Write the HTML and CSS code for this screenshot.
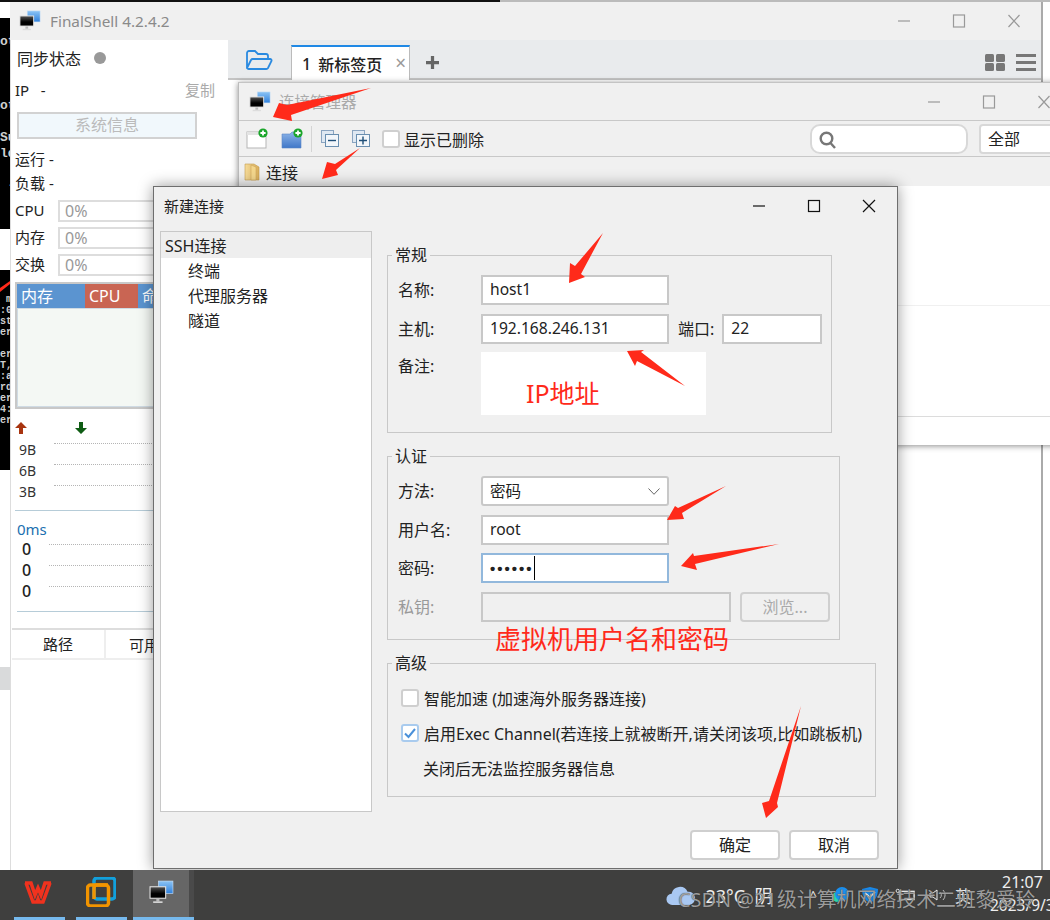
FILE: index.html
```html
<!DOCTYPE html>
<html lang="zh">
<head>
<meta charset="UTF-8">
<meta name="viewport" content="width=device-width, initial-scale=1.0">
<title>FinalShell 新建连接</title>
<link rel="stylesheet" href="styles.css">
</head>
<body>

<svg class="defs" width="0" height="0">
  <defs>
    <linearGradient id="backScreen" x1="0" y1="0" x2="0" y2="1"><stop offset="0" stop-color="#8cc4f5"/><stop offset="1" stop-color="#2f80dc"/></linearGradient>
    <linearGradient id="frontScreen" x1="0" y1="0" x2="0" y2="1"><stop offset="0" stop-color="#555"/><stop offset=".6" stop-color="#000"/></linearGradient>
    <linearGradient id="blueFolder" x1="0" y1="0" x2="0" y2="1"><stop offset="0" stop-color="#8db4e8"/><stop offset="1" stop-color="#3f77c8"/></linearGradient>
    <linearGradient id="yellowFolder" x1="0" y1="0" x2="1" y2="0"><stop offset="0" stop-color="#f6dc9a"/><stop offset="1" stop-color="#d9ae5a"/></linearGradient>
    <symbol id="monitor" viewBox="0 0 24 24">
      <rect x="9" y="1" width="14" height="12" fill="url(#backScreen)" stroke="#c9dff5" stroke-width=".6"/>
      <rect x="1" y="6.5" width="15" height="11" fill="url(#frontScreen)" stroke="#e8e8e8" stroke-width="1"/>
      <rect x="7" y="18" width="3" height="2.5" fill="#bbb"/>
      <rect x="4" y="20.5" width="9" height="1.5" fill="#ddd"/>
    </symbol>
    <symbol id="plusBadge" viewBox="0 0 10 10">
      <circle cx="5" cy="5" r="4.6" fill="#1aa52a"/>
      <path d="M5 2.4v5.2M2.4 5h5.2" stroke="#fff" stroke-width="1.8"/>
    </symbol>
  </defs>
</svg>

<div class="desk">
  <div class="topline"></div>

  <div class="backdrop">
    <pre class="term term-a">

ot



ot

Su
ld

 -</pre>
    <pre class="term term-b"> m
:0
st
er

er
T,
:a
rd
er
4:
er</pre>
    <div class="back-band"></div>
  </div>

  <!-- main window -->
  <div class="window main-window">
    <div class="titlebar main-title">
      <svg class="app-icon"><use href="#monitor"/></svg>
      <span class="app-name">FinalShell 4.2.4.2</span>
      <div class="win-controls faded">
        <svg viewBox="0 0 14 14"><path d="M1 7h12"/></svg>
        <svg viewBox="0 0 14 14"><rect x="1.5" y="1" width="11" height="12"/></svg>
        <svg viewBox="0 0 14 14"><path d="M1.5 1l11 12M12.5 1l-11 12"/></svg>
      </div>
    </div>

    <div class="main-body">
      <aside class="side-panel">
        <div class="sync-row">同步状态<span class="sync-dot"></span></div>
        <div class="ip-row"><span>IP &nbsp; -</span><span class="copy-link">复制</span></div>
        <div class="sysinfo">系统信息</div>
        <div class="stat-row first">运行 -</div>
        <div class="stat-row">负载 -</div>
        <div class="gauges">
          <span>CPU</span><div class="gauge">0%</div>
          <span>内存</span><div class="gauge">0%</div>
          <span>交换</span><div class="gauge">0%</div>
        </div>
        <div class="proc-table">
          <div class="proc-head">
            <span class="col-mem">内存</span>
            <span class="col-cpu">CPU</span>
            <span class="col-cmd">命令</span>
          </div>
          <div class="proc-body"></div>
        </div>
        <div class="net-arrows">
          <svg viewBox="0 0 12 12"><path class="up" d="M6 0l6 6H8v6H4V6H0z"/></svg>
          <svg viewBox="0 0 12 12"><path class="down" d="M6 12l6-6H8V0H4v6H0z"/></svg>
        </div>
        <div class="chart-rows net">
          <div class="chart-row"><span>9B</span><i></i></div>
          <div class="chart-row"><span>6B</span><i></i></div>
          <div class="chart-row"><span>3B</span><i></i></div>
        </div>
        <div class="rule"></div>
        <div class="ping-label">0ms</div>
        <div class="chart-rows ping">
          <div class="chart-row"><span>0</span><i></i></div>
          <div class="chart-row"><span>0</span><i></i></div>
          <div class="chart-row"><span>0</span><i></i></div>
        </div>
        <div class="rule rule-b"></div>
        <div class="disk-head"><span class="disk-path">路径</span><span>可用</span></div>
      </aside>

      <div class="work-area">
        <div class="tabbar">
          <svg class="open-icon" viewBox="0 0 28 21"><path d="M2 18V3a2 2 0 0 1 2-2h6l3 3h8a2 2 0 0 1 2 2v3M2 18l4-8a2 2 0 0 1 2-1h17a1.500 1.500 0 0 1 1.500 2l-3.500 7a2 2 0 0 1-2 1H4a2 2 0 0 1-2-1z"/></svg>
          <div class="tab"><b>1</b><b>新标签页</b><span class="tab-close">×</span></div>
          <svg class="tab-add" viewBox="0 0 12 12"><path d="M6 0v12M0 6h12"/></svg>
          <div class="tab-tools">
            <svg viewBox="0 0 20 17"><rect width="9" height="8" rx="1.500"/><rect x="11" width="9" height="8" rx="1.500"/><rect y="9" width="9" height="8" rx="1.500"/><rect x="11" y="9" width="9" height="8" rx="1.500"/></svg>
            <svg viewBox="0 0 20 17"><rect width="20" height="3"/><rect y="7" width="20" height="3"/><rect y="14" width="20" height="3"/></svg>
          </div>
        </div>
        <div class="main-rest"></div>
      </div>
    </div>
  </div>

  <!-- connection manager -->
  <div class="window manager">
    <div class="titlebar manager-title">
      <svg class="app-icon"><use href="#monitor"/></svg>
      <span class="manager-name">连接管理器</span>
      <div class="win-controls faded">
        <svg viewBox="0 0 14 14"><path d="M1 7h12"/></svg>
        <svg viewBox="0 0 14 14"><rect x="1.500" y="1" width="11" height="12"/></svg>
        <svg viewBox="0 0 14 14"><path d="M1.500 1l11 12M12.500 1l-11 12"/></svg>
      </div>
    </div>
    <div class="manager-tools">
      <svg class="tool-icon" viewBox="0 0 22 21">
        <rect x="1" y="4" width="19" height="16" fill="#fff" stroke="#b5b5b5"/>
        <rect x="1" y="4" width="19" height="3" fill="#e4e4e4"/>
        <use href="#plusBadge" x="12" y="0" width="10" height="10"/>
      </svg>
      <svg class="tool-icon gap-b" viewBox="0 0 22 21">
        <path d="M1 6h8l2-2h9v16H1z" fill="url(#blueFolder)" stroke="#5a88c8" stroke-width=".6"/>
        <use href="#plusBadge" x="12" y="0" width="10" height="10"/>
      </svg>
      <span class="tool-sep"></span>
      <svg class="tree-icon" viewBox="0 0 18 17">
        <rect x=".5" y=".5" width="12" height="12" fill="#dfe8f2" stroke="#8aa4c0"/>
        <rect x="4.500" y="4.500" width="13" height="12" fill="#f2f6fa" stroke="#6a8fb0"/>
        <path d="M7 10.500h8" stroke="#1f4f78" stroke-width="1.400"/>
      </svg>
      <svg class="tree-icon plus" viewBox="0 0 18 17">
        <rect x=".5" y=".5" width="12" height="12" fill="#dfe8f2" stroke="#8aa4c0"/>
        <rect x="4.500" y="4.500" width="13" height="12" fill="#f2f6fa" stroke="#6a8fb0"/>
        <path d="M7 10.500h8M11 6.500v8" stroke="#1f4f78" stroke-width="1.400"/>
      </svg>
      <span class="check small"></span>
      <span class="show-deleted">显示已删除</span>
      <div class="search">
        <svg viewBox="0 0 18 18"><circle cx="7.500" cy="7.500" r="5.800"/><path d="M11.500 12l4.500 5"/></svg>
      </div>
      <div class="combo">全部</div>
    </div>
    <div class="manager-tree">
      <svg viewBox="0 0 16 19"><path d="M1 2h9l5 3v13H1z" fill="url(#yellowFolder)" stroke="#c49a4e" stroke-width=".6"/><path d="M7 3l5 2v13H7z" fill="#f3d68c" stroke="#c49a4e" stroke-width=".5"/></svg>
      连接
    </div>
    <div class="manager-list">
      <div class="list-line a"></div>
      <div class="list-line b"></div>
    </div>
  </div>

  <!-- new connection dialog -->
  <div class="window dialog">
    <div class="titlebar dialog-title">
      <span class="dialog-name">新建连接</span>
      <div class="win-controls">
        <svg viewBox="0 0 14 14"><path d="M1 7h12"/></svg>
        <svg viewBox="0 0 14 14"><rect x="1.500" y="1.500" width="11" height="11"/></svg>
        <svg viewBox="0 0 14 14"><path d="M1 1l12 12M13 1L1 13"/></svg>
      </div>
    </div>
    <div class="dialog-body">
      <ul class="nav-list">
        <li class="selected">SSH连接</li>
        <li>终端</li>
        <li>代理服务器</li>
        <li>隧道</li>
      </ul>
      <div class="dialog-form">
        <section class="group group-general">
          <h2>常规</h2>
          <div class="form-grid">
            <label>名称:</label><div class="field w188">host1</div>
            <label>主机:</label>
            <div class="host-row">
              <div class="field w188">192.168.246.131</div>
              <span class="port-label">端口:</span>
              <div class="field w100">22</div>
            </div>
            <label class="top">备注:</label>
            <div class="remark">IP地址</div>
          </div>
        </section>
        <section class="group group-auth">
          <h2>认证</h2>
          <div class="form-grid">
            <label>方法:</label>
            <div class="field w188 select">密码
              <svg viewBox="0 0 12 7"><path d="M.5.5L6 6.300 11.500.5"/></svg>
            </div>
            <label>用户名:</label><div class="field w188">root</div>
            <label>密码:</label><div class="field w188 focused"><span class="dots">••••••</span><span class="caret"></span></div>
            <label class="disabled">私钥:</label>
            <div class="key-row">
              <div class="field w250 off"></div>
              <div class="btn btn-off">浏览...</div>
            </div>
          </div>
        </section>
        <section class="group group-advanced">
          <h2>高级</h2>
          <div class="opt-row"><span class="check"></span>智能加速 (加速海外服务器连接)</div>
          <div class="opt-row">
            <span class="check checked"><svg viewBox="0 0 14 14"><path d="M2 7.500l3.500 3.500L12 3"/></svg></span>
            启用Exec Channel(若连接上就被断开,请关闭该项,比如跳板机)
          </div>
          <div class="opt-row note-row">关闭后无法监控服务器信息</div>
        </section>
        <div class="dialog-buttons">
          <div class="btn">确定</div>
          <div class="btn">取消</div>
        </div>
      </div>
    </div>
  </div>

  <!-- red marks pasted on top of the screenshot -->
  <svg class="marks" viewBox="0 0 1050 920">
    <polygon points="371,88 287,105 279,103 273,117 292,121 291,115"/>
    <polygon points="360,148 335,164 327,162 322,179 338,175 336,170"/>
    <polygon points="603,233 575,266 570,263 569,283 585,277 581,274"/>
    <polygon points="685,386 641,352 644,350 627,351 635,366 637,361"/>
    <polygon points="726,486 678,508 675,506 667,520 684,519 682,513"/>
    <polygon points="779,544 694,556 693,553 681,566 697,570 695,564"/>
    <polygon points="801,706 777,803 778,807 766,818 762,803 769,801"/>
    <polygon points="0,288 10,281 10,284 0,292"/>
  </svg>
  <div class="mark-text">虚拟机用户名和密码</div>

  <!-- taskbar -->
  <footer class="taskbar">
    <div class="task-app">
      <svg class="wps" viewBox="0 0 30 24"><path d="M2 3h6l4 12 3-7 3 7 4-12h6" fill="none"/><path d="M3 3l7 19h4l1-3 1 3h4l7-19" fill="none"/></svg>
    </div>
    <div class="task-app">
      <svg class="vm" viewBox="0 0 30 30">
        <rect x="8" y="1" width="21" height="21" rx="3" fill="none" stroke="#12a0dc" stroke-width="3.500"/>
        <rect x="1.500" y="8" width="21" height="21" rx="3" fill="none" stroke="#f29400" stroke-width="3.500"/>
        <path d="M8 22V11a3 3 0 0 1 3-3h11" fill="none" stroke="#f29400" stroke-width="3.500"/>
      </svg>
    </div>
    <div class="task-app active"><svg class="mon"><use href="#monitor"/></svg></div>
    <div class="tray">
      <svg class="cloud" viewBox="0 0 32 22"><path d="M7 21a6 6 0 0 1-1-12 9 9 0 0 1 17-2 7 7 0 0 1 2 14z" fill="#a9c8f2"/></svg>
      <span class="weather">23°C &nbsp;阴</span>
      <span class="chev">^</span>
      <svg class="tray-icon bubble" viewBox="0 0 18 18"><circle cx="6" cy="11" r="5" fill="#2dd4a8"/><circle cx="11" cy="8" r="7" fill="#1a90f0"/></svg>
      <svg class="tray-icon shield" viewBox="0 0 18 18"><path d="M1 3l8-2 8 2c0 7-3 12-8 14C4 15 1 10 1 3z" fill="#1a88e8"/><path d="M4 7l5 4 5-5" stroke="#fff" stroke-width="1.500" fill="none"/></svg>
      <svg class="tray-icon battery" viewBox="0 0 22 14"><rect x="5" y="3" width="16" height="9" fill="none" stroke="#eee" stroke-width="1.500"/><circle cx="3" cy="2.500" r="1.800" fill="none" stroke="#eee"/></svg>
      <svg class="tray-icon speaker" viewBox="0 0 18 14"><path d="M1 5h3l4-3v10L4 9H1z" fill="none" stroke="#eee"/><path d="M11 4a4 4 0 0 1 0 6M14 2a7 7 0 0 1 0 10" fill="none" stroke="#bbb"/></svg>
      <span class="ime">英</span>
      <div class="clock"><span class="clock-time">21:07</span><span>2023/9/3</span></div>
    </div>
  </footer>
  <div class="watermark">CSDN @21级计算机网络技术二班黎爱玲</div>
</div>

</body>
</html>
```

FILE: styles.css
```css
* {
  box-sizing: border-box;
}
body {
  margin: 0;
  font-family: "Noto Sans", "Noto Sans CJK SC", sans-serif;
  font-size: 16px;
  color: #222;
}
.defs {
  position: absolute;
}
.desk {
  position: relative;
  width: 1050px;
  height: 920px;
  overflow: hidden;
  background: #fff;
}
.topline {
  position: absolute;
  top: 0;
  left: 0;
  width: 1050px;
  height: 2px;
  background: linear-gradient(to right, #111 0, #111 500px, #bbb 500px);
  z-index: 5;
}

/* what shows left of the main window */
.backdrop {
  position: absolute;
  left: 0;
  top: 0;
  width: 10px;
  height: 870px;
  background: #fff;
  overflow: hidden;
}
.term {
  position: absolute;
  left: 0;
  margin: 0;
  width: 10px;
  overflow: hidden;
  background: #000;
  color: #cfcfcf;
  font-family: "Liberation Mono", monospace;
  font-weight: bold;
}
.term-a {
  top: 18px;
  height: 211px;
  font-size: 13px;
  line-height: 16px;
}
.term-b {
  top: 270px;
  height: 200px;
  padding-top: 24px;
  font-size: 10px;
  line-height: 11px;
}
.back-band {
  position: absolute;
  top: 667px;
  left: 0;
  width: 10px;
  height: 23px;
  background: #d9dadb;
}

/* windows */
.window {
  position: absolute;
  background: #f0f0f0;
}
.titlebar {
  display: flex;
  align-items: center;
}
.win-controls {
  display: flex;
  margin-left: auto;
}
.win-controls svg {
  width: 14px;
  height: 14px;
  margin: 0 20.500px;
  fill: none;
  stroke: #111;
  stroke-width: 1.200;
}
.win-controls.faded svg {
  stroke: #999;
}
.app-icon {
  width: 22px;
  height: 22px;
}

.main-window {
  left: 10px;
  top: 2px;
  width: 1033px;
  height: 868px;
  border-right: 2px solid #aaa;
  display: flex;
  flex-direction: column;
}
.main-title {
  height: 38px;
  flex: none;
  padding-left: 9px;
}
.app-name {
  margin-left: 9px;
  font-size: 15.300px;
  color: #8a8a8a;
}
.main-body {
  flex: 1;
  display: flex;
  min-height: 0;
  background: #fff;
}

/* left panel */
.side-panel {
  width: 218px;
  flex: none;
  padding-left: 4px;
  overflow: hidden;
  background: #fff;
  border-left: 1px solid #ddd;
  font-size: 15px;
}
.sync-row {
  height: 35px;
  padding-left: 2px;
  display: flex;
  align-items: center;
  font-size: 16px;
}
.sync-dot {
  width: 12px;
  height: 12px;
  margin-left: 13px;
  border-radius: 50%;
  background: #999;
}
.ip-row {
  height: 29px;
  padding-right: 13px;
  display: flex;
  justify-content: space-between;
  align-items: center;
}
.copy-link {
  color: #aaa;
}
.sysinfo {
  width: 180px;
  height: 27px;
  margin: 8px 0 0 2px;
  border: 2px solid #d2d2d2;
  background: #f1f8fc;
  color: #bbb;
  font-size: 16px;
  text-align: center;
  line-height: 23px;
}
.stat-row {
  height: 24px;
  line-height: 22px;
}
.stat-row.first {
  margin-top: 9px;
}
.gauges {
  margin-top: 4px;
  display: grid;
  grid-template-columns: 43px 1fr;
  grid-auto-rows: 22px;
  row-gap: 5px;
  align-items: center;
}
.gauges span {
  line-height: 18px;
  padding-bottom: 2px;
}
.gauge {
  height: 22px;
  margin-right: 8px;
  padding-left: 5px;
  border: 2px solid #ddd;
  font-size: 16px;
  line-height: 18px;
  color: #999;
}
.proc-table {
  height: 127px;
  margin-top: 6px;
  border: 2px solid #c8c8c8;
  display: flex;
  flex-direction: column;
}
.proc-head {
  height: 24px;
  flex: none;
  display: flex;
  color: #fff;
  line-height: 24px;
  font-size: 16px;
}
.proc-head span {
  padding-left: 4px;
}
.col-mem {
  width: 68px;
  background: #5b94d0;
}
.col-cpu {
  width: 53px;
  background: #c96553;
}
.col-cmd {
  flex: 1;
  background: #5b94d0;
}
.proc-body {
  flex: 1;
  background: #f4f8f4;
  border: 1px solid #cfdbe4;
}
.net-arrows {
  height: 14px;
  margin-top: 13px;
  display: flex;
  gap: 48px;
}
.net-arrows svg {
  width: 12px;
  height: 12px;
}
.up {
  fill: #a83410;
}
.down {
  fill: #0f5c14;
}
.chart-rows {
  display: flex;
  flex-direction: column;
}
.chart-row {
  height: 21px;
  display: flex;
  align-items: center;
}
.chart-row i {
  flex: 1;
  height: 0;
  margin-top: -12px;
  border-top: 1px dotted #b5b5b5;
}
.net {
  margin-top: 3px;
}
.net span {
  width: 39px;
  padding-left: 4px;
  font-size: 14px;
  color: #333;
}
.net i {
  margin-right: 72px;
}
.rule {
  height: 1px;
  margin-top: 8px;
  background: #b6ccd8;
}
.ping-label {
  margin: 9px 0 0 2px;
  color: #2070b0;
  line-height: 19px;
}
.ping {
  margin-top: -1px;
}
.ping span {
  width: 34px;
  padding-left: 7px;
  font-size: 16px;
  font-weight: 500;
}
.ping i {
  margin-right: 72px;
  margin-top: -8px;
}
.rule-b {
  margin: 10px 0 0 2px;
}
.disk-head {
  height: 32px;
  margin: 16px 0 0 -3px;
  border-top: 2px solid #ddd;
  border-bottom: 2px solid #eee;
  display: flex;
  align-items: center;
}
.disk-path {
  width: 94px;
  margin-right: 23px;
  border-right: 2px solid #eee;
  text-align: center;
  line-height: 28px;
}

/* tabs */
.work-area {
  flex: 1;
  display: flex;
  flex-direction: column;
}
.tabbar {
  height: 40px;
  flex: none;
  display: flex;
  align-items: flex-end;
  padding-left: 17px;
  background: #e9ebed;
  border-bottom: 2px solid #c4c4c4;
}
.open-icon {
  width: 28px;
  height: 21px;
  margin-bottom: 7px;
  fill: none;
  stroke: #2a8ae0;
  stroke-width: 1.800;
}
.tab {
  width: 119px;
  height: 35px;
  margin: 0 0 -2px 18px;
  padding-left: 10px;
  display: flex;
  gap: 7px;
  align-items: center;
  background: #fff;
  border-top: 2px solid #1e88e5;
  border-left: 1px solid #bbb;
  border-right: 1px solid #bbb;
}
.tab b {
  font-weight: 500;
}
.tab-close {
  margin-left: 6px;
  font-size: 19px;
  line-height: 1;
  color: #999;
}
.tab-add {
  width: 13px;
  height: 13px;
  margin: 0 0 9px 16px;
  fill: none;
  stroke: #666;
  stroke-width: 3;
}
.tab-tools {
  margin: 0 0 7px auto;
  padding-right: 5px;
  display: flex;
  gap: 11px;
}
.tab-tools svg {
  width: 20px;
  height: 17px;
  fill: #777;
}
.main-rest {
  flex: 1;
  background: #fff;
}

/* connection manager */
.manager {
  left: 238px;
  top: 82px;
  width: 835px;
  height: 363px;
  border-left: 1px solid #bbb;
  border-top: 1px solid #c4c4c4;
  box-shadow: 0 1px 6px rgba(0, 0, 0, .45);
  display: flex;
  flex-direction: column;
}
.manager-title {
  height: 38px;
  flex: none;
  padding-left: 10px;
  padding-right: 2px;
  border-bottom: 1px solid #c8c8c8;
}
.manager-name {
  margin-left: 8px;
  font-size: 15.500px;
  color: #aaa;
}
.manager-tools {
  height: 36px;
  flex: none;
  padding-left: 7px;
  display: flex;
  align-items: center;
  border-bottom: 1px solid #c8c8c8;
}
.tool-icon {
  width: 22px;
  height: 21px;
  flex: none;
  margin-right: 13px;
}
.tool-sep {
  width: 1px;
  height: 26px;
  flex: none;
  margin: 0 9px 0 -5px;
  background: #d4d4d4;
}
.tree-icon {
  width: 18px;
  height: 17px;
  flex: none;
  margin-right: 13px;
}
.check {
  width: 18px;
  height: 18px;
  flex: none;
  border: 2px solid #cfcfcf;
  border-radius: 3px;
  background: #fff;
}
.check.small {
  margin-left: -1px;
}
.show-deleted {
  flex: none;
  margin-left: 4px;
  white-space: nowrap;
}
.search {
  width: 158px;
  height: 30px;
  flex: none;
  margin-left: 326px;
  padding: 5px 0 0 7px;
  border: 2px solid #d8d8d8;
  border-radius: 10px;
  background: #fff;
}
.search svg {
  width: 18px;
  height: 18px;
  fill: none;
  stroke: #777;
  stroke-width: 2.400;
}
.combo {
  width: 100px;
  height: 30px;
  flex: none;
  margin-left: 11px;
  padding-left: 7px;
  border: 2px solid #d8d8d8;
  border-radius: 4px;
  background: #fff;
  line-height: 26px;
}
.manager-tree {
  height: 29px;
  flex: none;
  padding-left: 5px;
  display: flex;
  align-items: center;
  gap: 6px;
}
.manager-tree svg {
  width: 16px;
  height: 19px;
}
.manager-list {
  flex: 1;
  background: #fff;
  display: flex;
  flex-direction: column;
}
.list-line {
  height: 1px;
}
.list-line.a {
  margin-top: 119px;
  background: #f0f0f0;
}
.list-line.b {
  margin-top: 110px;
  background: #dcdcdc;
}

/* new connection dialog */
.dialog {
  left: 153px;
  top: 186px;
  width: 745px;
  height: 683px;
  border: 1px solid #6e6e6e;
  box-shadow: 0 0 14px rgba(0, 0, 0, .4);
  display: flex;
  flex-direction: column;
}
.dialog-title {
  height: 38px;
  flex: none;
  padding-left: 10px;
  padding-right: 1px;
  font-size: 15px;
}
.dialog-name {
  padding-bottom: 2px;
}
.dialog-body {
  flex: 1;
  display: flex;
  padding: 6px 18px 0 6px;
}
.nav-list {
  width: 212px;
  height: 581px;
  flex: none;
  margin: 0;
  padding: 0;
  list-style: none;
  background: #fff;
  border: 1px solid #c8c8c8;
}
.nav-list li {
  height: 25px;
  padding-left: 27px;
  line-height: 27px;
}
.nav-list li.selected {
  height: 26px;
  padding-left: 4px;
  background: #eeeeee;
  line-height: 29px;
}
.dialog-form {
  flex: 1;
  margin-left: 15px;
  padding-top: 24px;
  display: flex;
  flex-direction: column;
  gap: 23px;
}
.group {
  position: relative;
  border: 1px solid #c8c8c8;
}
.group h2 {
  position: absolute;
  top: -11px;
  left: 4px;
  margin: 0;
  padding: 0 3px;
  background: #f0f0f0;
  font-size: 16px;
  font-weight: normal;
  line-height: 20px;
}
.group-general {
  width: 445px;
  height: 178px;
  padding: 19px 0 0 10px;
}
.group-auth {
  width: 453px;
  height: 184px;
  padding: 19px 0 0 10px;
}
.group-advanced {
  width: 489px;
  height: 134px;
  padding: 16px 0 0 13px;
}
.form-grid {
  display: grid;
  grid-template-columns: 83px 1fr;
  row-gap: 8.600px;
  align-items: center;
}
.form-grid label {
  padding-bottom: 2px;
}
.form-grid label.top {
  align-self: start;
  padding-top: 1px;
}
.form-grid label.disabled {
  color: #999;
}
.field {
  height: 30px;
  padding-left: 7px;
  border: 2px solid #c8c8c8;
  background: #fff;
  font-size: 15.600px;
  line-height: 25px;
}
.w188 {
  width: 188px;
}
.w100 {
  width: 100px;
}
.w250 {
  width: 250px;
}
.host-row,
.key-row {
  display: flex;
  align-items: center;
}
.port-label {
  margin: 0 8px 0 9px;
  padding-bottom: 2px;
}
.key-row {
  gap: 9px;
}
.remark {
  width: 225px;
  height: 63px;
  padding: 23px 0 0 45px;
  background: #fff;
  color: #ff2a1a;
  font-size: 25px;
  line-height: 36px;
}
.select {
  padding-right: 7px;
  border-radius: 3px;
  display: flex;
  justify-content: space-between;
  align-items: center;
}
.select svg {
  width: 12px;
  height: 7px;
  fill: none;
  stroke: #666;
}
.focused {
  border-color: #92b8dc;
  display: flex;
  align-items: center;
}
.dots {
  font-size: 15px;
  font-family: "Liberation Sans", sans-serif;
  font-weight: bold;
  letter-spacing: 2px;
}
.caret {
  width: 1px;
  height: 24px;
  margin-left: 0;
  background: #000;
}
.off {
  background: #f0f0f0;
}
.btn {
  width: 90px;
  height: 30px;
  border: 2px solid #cfcfcf;
  border-radius: 4px;
  background: #fff;
  text-align: center;
  line-height: 26px;
}
.btn-off {
  background: #f0f0f0;
  color: #aaa;
}
.opt-row {
  height: 35px;
  display: flex;
  align-items: center;
  gap: 5px;
  white-space: nowrap;
}
.note-row {
  padding-left: 22px;
}
.check.checked {
  border-color: #a9cbee;
}
.check.checked svg {
  display: block;
  fill: none;
  stroke: #4a90d9;
  stroke-width: 2;
}
.dialog-buttons {
  margin-top: 10px;
  width: 492px;
  display: flex;
  justify-content: flex-end;
  gap: 9px;
}

/* annotations */
.marks {
  position: absolute;
  left: 0;
  top: 0;
  width: 1050px;
  height: 920px;
  fill: #ff2a1a;
}
.mark-text {
  position: absolute;
  left: 495px;
  top: 621px;
  color: #ff2a1a;
  font-size: 26px;
  line-height: 36px;
  white-space: nowrap;
}

/* taskbar */
.taskbar {
  position: absolute;
  left: 0;
  top: 870px;
  width: 1050px;
  height: 50px;
  padding-left: 14px;
  display: flex;
  background: #3f3f3e;
  color: #eee;
}
.task-app {
  width: 51px;
  margin-right: 11px;
  display: flex;
  justify-content: center;
  align-items: center;
  padding-bottom: 3px;
  border-bottom: 3px solid #76b9ed;
}
.task-app.active {
  width: 61px;
  margin: 0 0 0 -5px;
  padding-right: 5px;
  background: linear-gradient(to right, #666 56px, #4a4a4a 56px);
}
.wps {
  width: 30px;
  height: 24px;
  margin-left: -3px;
  stroke: #f0321e;
  stroke-width: 3.500;
}
.vm {
  width: 30px;
  height: 30px;
  margin-left: -2px;
}
.mon {
  width: 25px;
  height: 25px;
}
.tray {
  margin-left: auto;
  display: flex;
  align-items: center;
  position: relative;
}
.cloud {
  width: 30px;
  height: 21px;
}
.weather {
  margin-left: 10px;
  font-size: 18px;
  white-space: nowrap;
}
.chev {
  margin-left: 37px;
  font-size: 13px;
}
.tray-icon {
  width: 18px;
  height: 18px;
}
.bubble {
  margin-left: 14px;
}
.shield {
  margin-left: 12px;
}
.battery {
  margin-left: 16px;
  width: 20px;
}
.speaker {
  margin-left: 14px;
}
.ime {
  margin-left: 8px;
  font-size: 16px;
}
.clock {
  width: 60px;
  margin-left: 19px;
  padding-bottom: 3px;
  display: flex;
  flex-direction: column;
  align-items: flex-start;
  line-height: 23px;
  font-size: 15.500px;
  white-space: nowrap;
}
.clock-time {
  margin-left: 12px;
  font-size: 16px;
}
.watermark {
  position: absolute;
  left: 678px;
  top: 888px;
  color: rgba(190, 190, 190, .78);
  font-size: 19.900px;
  line-height: 24px;
  white-space: nowrap;
  text-shadow: 0 0 1px #222;
}
```
